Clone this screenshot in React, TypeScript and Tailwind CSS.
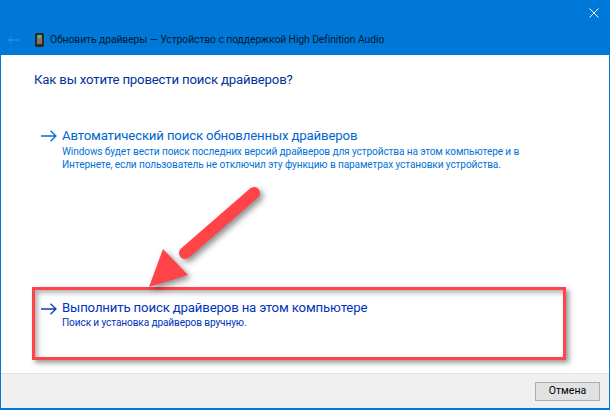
import React from "react";

const font = { fontFamily: 'Roboto, "Noto Sans", sans-serif' };

function LinkArrow({ color }: { color: string }) {
  return (
    <svg width="16" height="12" viewBox="0 0 16 12" className="shrink-0" fill="none" stroke={color} strokeWidth="1.3">
      <path d="M0 6h15M9.500 .7 15 6l-5.500 5.300" />
    </svg>
  );
}

function Option({ title, lines, className, titleClass, descColor, arrow }: { title: string; lines: string[]; className: string; titleClass: string; descColor: string; arrow: string }) {
  return (
    <div className={`flex items-start gap-[5px] pl-[40px] ${className}`}>
      <div className="pt-[4px]"><LinkArrow color={arrow} /></div>
      <div>
        <div className={`text-[13.2px] tracking-[-0.15px] whitespace-nowrap ${titleClass}`}>{title}</div>
        {lines.map((l) => (
          <div key={l} className={`text-[10.1px] tracking-[-0.11px] leading-[13px] whitespace-nowrap ${descColor}`}>{l}</div>
        ))}
      </div>
    </div>
  );
}

export default function App() {
  return (
    <div className="relative w-[610px] h-[410px] overflow-hidden bg-[#0078d7] flex flex-col" style={font}>
      <div className="h-[55px] shrink-0 relative">
        <div className="absolute right-[11px] top-[8px]">
          <svg width="10" height="10" viewBox="0 0 10 10" stroke="#fff" strokeWidth="1" fill="none"><path d="M.5.500l9 9M9.500.500l-9 9" /></svg>
        </div>
        <div className="flex items-center h-full pt-[24px] pl-[8px]">
          <svg width="12" height="8" viewBox="0 0 12 8" fill="none" stroke="#3f8fd8" strokeWidth="1" className="mr-[15px]"><path d="M0 4h11M4 .5.700 4 4 7.500" /></svg>
          <svg width="9" height="14" viewBox="0 0 9 14" className="mr-[6px]">
            <rect x="0" y="0" width="9" height="14" rx="1" fill="#2b2b2b" />
            <rect x="2" y="2" width="5" height="9" fill="#8a6f63" />
            <rect x="3" y="2" width="3" height="3" fill="#36d05a" />
          </svg>
          <span className="text-[10.4px] tracking-[-0.1px] leading-[16px] text-[#031a33] whitespace-nowrap">Обновить драйверы — Устройство с поддержкой High Definition Audio</span>
        </div>
      </div>
      <div className="flex-1 mx-[1px] mb-[2px] bg-white flex flex-col min-h-0">
        <div className="flex-1 min-h-0">
          <div className="pl-[33px] pt-[15px] text-[13.2px] tracking-[-0.18px] leading-[20px] text-[#003399]">Как вы хотите провести поиск драйверов?</div>
          <Option
            className="mt-[36px]"
            titleClass="leading-[19px] text-[#0066cc]"
            descColor="text-[#0073d9]"
            arrow="#0a6fd1"
            title="Автоматический поиск обновленных драйверов"
            lines={[
              "Windows будет вести поиск последних версий драйверов для устройства на этом компьютере и в",
              "Интернете, если пользователь не отключил эту функцию в параметрах установки устройства.",
            ]}
          />
          <Option
            className="mt-[128px]"
            titleClass="leading-[17px] text-[#0033bb]"
            descColor="text-[#0033bb]"
            arrow="#0a3fb0"
            title="Выполнить поиск драйверов на этом компьютере"
            lines={["Поиск и установка драйверов вручную."]}
          />
        </div>
        <div className="h-[35px] shrink-0 bg-[#f0f0f0] border-t border-[#e3e3e3] flex items-center justify-end pr-[9px]">
          <button className="w-[65px] h-[19px] bg-[#e1e1e1] border border-[#adadad] text-[10.5px] leading-none text-black">Отмена</button>
        </div>
      </div>

      <div className="absolute left-[32px] top-[287px] w-[534px] h-[73px] border-[3px] border-[#ff4348] shadow-[3px_3px_5px_rgba(0,0,0,0.4),inset_3px_3px_5px_rgba(0,0,0,0.3)]" />
      <svg className="absolute left-[130px] top-[180px]" width="150" height="120" viewBox="0 0 150 120" style={{ filter: "drop-shadow(3px 3px 3px rgba(0,0,0,0.45))" }}>
        <path d="M124 13 55 73" stroke="#ff4348" strokeWidth="12" strokeLinecap="round" fill="none" />
        <path d="M19 107 33 69 58 95Z" fill="#ff4348" />
      </svg>
    </div>
  );
}
